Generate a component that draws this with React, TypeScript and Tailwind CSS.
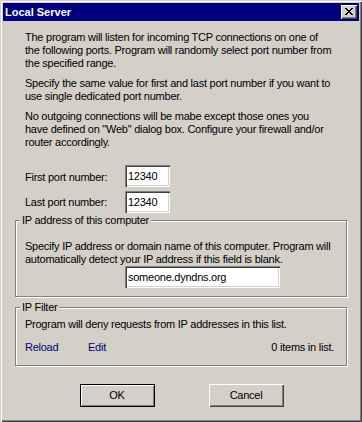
const face = "bg-[#d4d0c8]";

function SunkenInput({ value, width }: { value: string; width: string }) {
  return (
    <div
      className={`${width} h-[22px] bg-white flex items-center pl-[3px] shadow-[inset_1px_1px_0_#808080,inset_2px_2px_0_#404040,inset_-1px_-1px_0_#ffffff,inset_-2px_-2px_0_#d4d0c8]`}
    >
      {value}
    </div>
  );
}

function GroupBox({ title, className, children }: { title: string; className: string; children: React.ReactNode }) {
  return (
    <div
      className={`relative mx-[12px] border border-[#808080] shadow-[1px_1px_0_#ffffff,inset_1px_1px_0_#ffffff] ${className}`}
    >
      <span className={`absolute left-[4px] top-[-7px] px-[2px] leading-[13px] ${face}`}>{title}</span>
      {children}
    </div>
  );
}

function Button({ label, isDefault }: { label: string; isDefault?: boolean }) {
  return (
    <div
      className={
        isDefault
          ? "w-[75px] h-[23px] flex items-center justify-center border border-black shadow-[inset_1px_1px_0_#ffffff,inset_-1px_-1px_0_#808080]"
          : "w-[75px] h-[23px] flex items-center justify-center shadow-[inset_1px_1px_0_#ffffff,inset_-1px_-1px_0_#404040,inset_-2px_-2px_0_#808080]"
      }
    >
      {label}
    </div>
  );
}

export default function App() {
  return (
    <div
      className={`w-[362px] h-[422px] p-[3px] flex flex-col ${face} text-black text-[11px] leading-[13px] tracking-[-0.25px] shadow-[inset_1px_1px_0_#d4d0c8,inset_2px_2px_0_#ffffff,inset_-1px_-1px_0_#404040,inset_-2px_-2px_0_#808080]`}
      style={{ fontFamily: '"Liberation Sans", Arial, sans-serif' }}
    >
      {/* title bar */}
      <div className="h-[18px] bg-[#000080] flex items-center justify-between pl-[2px] pr-[2px]">
        <span className="text-white font-bold text-[11px] tracking-normal">Local Server</span>
        <div className={`w-[16px] h-[14px] flex items-center justify-center ${face} shadow-[inset_1px_1px_0_#ffffff,inset_-1px_-1px_0_#404040,inset_-2px_-2px_0_#808080]`}>
          <svg width="8" height="7" viewBox="0 0 8 7" className="mb-[1px]">
            <path d="M0 0h2v1h-2zM6 0h2v1h-2zM1 1h2v1h-2zM5 1h2v1h-2zM2 2h4v1h-4zM3 3h2v1h-2zM2 4h4v1h-4zM1 5h2v1h-2zM5 5h2v1h-2zM0 6h2v1h-2zM6 6h2v1h-2z" fill="#000" />
          </svg>
        </div>
      </div>

      {/* body */}
      <div className="flex flex-col pt-[10px]">
        <div className="px-[22px] flex flex-col gap-[7px] whitespace-nowrap">
          <p>
            The program will listen for incoming TCP connections on one of
            <br />
            the following ports. Program will randomly select port number from
            <br />
            the specified range.
          </p>
          <p>
            Specify the same value for first and last port number if you want to
            <br />
            use single dedicated port number.
          </p>
          <p>
            No outgoing connections will be mabe except those ones you
            <br />
            have defined on "Web" dialog box. Configure your firewall and/or
            <br />
            router accordingly.
          </p>
        </div>

        <div className="px-[22px] mt-[16px] flex flex-col gap-[4px]">
          <div className="flex items-center">
            <span className="w-[100px] mt-[3px]">First port number:</span>
            <SunkenInput value="12340" width="w-[45px]" />
          </div>
          <div className="flex items-center">
            <span className="w-[100px] mt-[1px]">Last port number:</span>
            <SunkenInput value="12340" width="w-[45px]" />
          </div>
        </div>

        <GroupBox title="IP address of this computer" className="mt-[7px] h-[77px] pt-[19px] pl-[9px] pr-[8px]">
          <p className="whitespace-nowrap">
            Specify IP address or domain name of this computer. Program will
            <br />
            automatically detect your IP address if this field is blank.
          </p>
          <div className="pl-[100px]">
            <SunkenInput value="someone.dyndns.org" width="w-[155px]" />
          </div>
        </GroupBox>

        <GroupBox title="IP Filter" className="mt-[10px] h-[59px] pt-[10px] pl-[9px] pr-[12px]">
          <p>Program will deny requests from IP addresses in this list.</p>
          <div className="flex items-center mt-[10px]">
            <span className="text-[#000080] w-[63px]">Reload</span>
            <span className="text-[#000080]">Edit</span>
            <span className="ml-auto">0 items in list.</span>
          </div>
        </GroupBox>

        <div className="mt-[18px] flex justify-center gap-[54px] pl-[1px]">
          <Button label="OK" isDefault />
          <Button label="Cancel" />
        </div>
      </div>
    </div>
  );
}
